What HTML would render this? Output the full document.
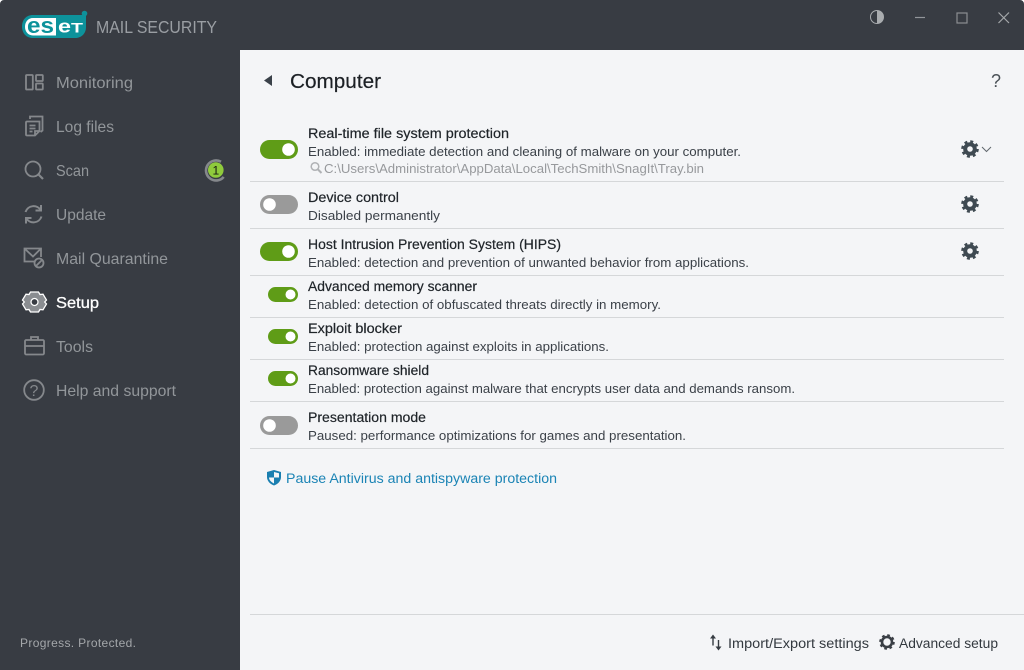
<!DOCTYPE html>
<html><head><meta charset="utf-8"><title>ESET Mail Security</title>
<style>
html,body{margin:0;padding:0;background:#fff;width:1024px;height:670px;overflow:hidden}
svg{display:block}
text{font-family:"Liberation Sans",sans-serif;white-space:pre}
.nav{font-size:16px;fill:#92969a}
.t{font-size:13.5px;fill:#1f2429;stroke:#1f2429;stroke-width:.2}
.s{font-size:13px;fill:#3b4148}
.f{font-size:13.5px;fill:#33393f}
</style></head><body>
<svg width="1024" height="670" viewBox="0 0 1024 670" xmlns="http://www.w3.org/2000/svg">
<defs>
<g id="gear"><circle r="4.8" fill="none" stroke="#3f4a52" stroke-width="4"/><circle r="7.6" fill="none" stroke="#3f4a52" stroke-width="2.400" stroke-dasharray="3 2.970"/></g>
<g id="on"><rect x="0" y="0" width="38" height="19" rx="9.5" fill="#5f9c17"/><circle cx="28.5" cy="9.5" r="6.3" fill="#fff"/></g>
<g id="off"><rect x="0" y="0" width="38" height="19" rx="9.5" fill="#9a9a9a"/><circle cx="9.5" cy="9.5" r="6.3" fill="#fff"/></g>
<g id="son"><rect x="0" y="0" width="30" height="15" rx="7.5" fill="#5f9c17"/><circle cx="22.5" cy="7.5" r="5" fill="#fff"/></g>
</defs>

<rect x="0" y="0" width="1024" height="670" fill="#fff"/>
<path d="M4 0H1020a4 4 0 0 1 4 4V50H240V670H0V4a4 4 0 0 1 4-4z" fill="#383c43"/>
<rect x="240" y="50" width="784" height="620" fill="#f4f5f7"/>

<!-- logo -->
<path d="M33 15H86V27C86 34 81 38 75 38H33C26 38 22 33 22 26.500C22 20 26 15 33 15z" fill="#0d929b"/>
<path d="M33 18H56V35.500H33C28 35.500 25 31.500 25 26.800C25 22 28 18 33 18z" fill="#fff"/>
<text x="27" y="33" font-size="22" font-weight="bold" fill="#0d929b" textLength="27" lengthAdjust="spacingAndGlyphs">es</text>
<text x="58" y="32.500" font-size="18" font-weight="bold" fill="#fff" textLength="13" lengthAdjust="spacingAndGlyphs">e</text>
<text x="71" y="32.500" font-size="14" font-weight="bold" fill="#fff" textLength="12" lengthAdjust="spacingAndGlyphs">T</text>
<circle cx="84.500" cy="13.500" r="2.800" fill="#0d929b"/>
<text x="96" y="33" font-size="17.500" fill="#9a9ea3" textLength="121" lengthAdjust="spacingAndGlyphs">MAIL SECURITY</text>

<!-- window controls -->
<circle cx="877" cy="17" r="6.500" fill="#383c43" stroke="#a9acaf" stroke-width="1"/>
<path d="M877 10.500a6.500 6.500 0 0 1 0 13z" fill="#a9acaf"/>
<path d="M915 17.500H925" stroke="#92959a" stroke-width="1.200"/>
<rect x="957" y="13" width="10" height="10" fill="none" stroke="#8b8e92" stroke-width="1.200"/>
<path d="M998.500 12.500L1009 23M1009 12.500L998.500 23" stroke="#a5a8ab" stroke-width="1.200" fill="none"/>

<!-- nav icons -->
<g fill="none" stroke="#85888c" stroke-width="1.800">
<rect x="26" y="75" width="6.800" height="14.500" rx=".8"/><rect x="36" y="75" width="6.800" height="6" rx=".8"/><rect x="36" y="83.500" width="6.800" height="6" rx=".8"/>
<path d="M30 119V116.500h12.500v14l-2 1.500M26 122.500a1 1 0 0 1 1-1h12.500v9.500l-4.500 4.500H27a1 1 0 0 1-1-1zM29.500 125.500h6M29.500 128.500h6M29.500 131.500h3M39.500 131h-4.500v4.500"/>
<circle cx="33" cy="169" r="7.500"/><path d="M38.500 174.500L43 179" stroke-width="2.200"/>
<path d="M41 210.500A8.500 8.500 0 0 0 25.500 212M41 205v5.500h-5.500" stroke-width="2"/>
<path d="M26 218A8.500 8.500 0 0 0 41.500 216.500M26 223.500v-5.500h5.500" stroke-width="2"/>
<path d="M35 261.500H24.500V248.500H41V257M25 249l8 7.500 7.500-7.500"/>
<circle cx="39" cy="263" r="4.500"/><path d="M36 266l6-6"/>
<rect x="25" y="340" width="19" height="14.500" rx="1.200"/><path d="M31 340v-3h7v3M25 346h19"/>
<circle cx="34" cy="390" r="9.800"/>
</g>
<text x="34" y="396" font-size="16" text-anchor="middle" fill="#85888c">?</text>
<!-- setup gear -->
<path d="M30.500 292h8l1.500 2.500 3-.3 3.500 5.800-1.800 2 1.800 2-3.500 5.800-3-.3-1.500 2.500h-8l-1.500-2.500-3 .3-3.500-5.800 1.800-2-1.800-2 3.500-5.800 3 .3z" fill="#8a8d91" stroke="#fff" stroke-width="1.300"/>
<circle cx="34.500" cy="302" r="3.500" fill="#383c43" stroke="#fff" stroke-width="1.300"/>

<!-- nav -->
<text class="nav" x="56" y="88" textLength="77" lengthAdjust="spacingAndGlyphs">Monitoring</text>
<text class="nav" x="56" y="132" textLength="58" lengthAdjust="spacingAndGlyphs">Log files</text>
<text class="nav" x="56" y="176" textLength="33" lengthAdjust="spacingAndGlyphs">Scan</text>
<text class="nav" x="56" y="220" textLength="50" lengthAdjust="spacingAndGlyphs">Update</text>
<text class="nav" x="56" y="264" textLength="112" lengthAdjust="spacingAndGlyphs">Mail Quarantine</text>
<text x="56" y="308" font-size="16" fill="#fff" stroke="#fff" stroke-width=".3" textLength="43" lengthAdjust="spacingAndGlyphs">Setup</text>
<text class="nav" x="56" y="352" textLength="37" lengthAdjust="spacingAndGlyphs">Tools</text>
<text class="nav" x="56" y="396" textLength="120" lengthAdjust="spacingAndGlyphs">Help and support</text>
<text x="20" y="647" font-size="12" fill="#a4a7aa" textLength="116" lengthAdjust="spacing">Progress. Protected.</text>

<!-- badge -->
<path d="M221 161.800A10 10 0 1 0 223.700 176.900" fill="none" stroke="#85888c" stroke-width="2.600"/>
<circle cx="215.800" cy="170" r="7.800" fill="#8fcb3c"/>
<text x="215.800" y="174.500" font-size="12" text-anchor="middle" fill="#15190f">1</text>

<!-- header -->
<path d="M272 75v11l-8-5.500z" fill="#3a4149"/>
<text x="290" y="88" font-size="20" fill="#1c2025" stroke="#1c2025" stroke-width=".2" textLength="91" lengthAdjust="spacingAndGlyphs">Computer</text>
<text x="996" y="87" font-size="18" text-anchor="middle" fill="#4a5157">?</text>

<!-- rows -->
<use href="#on" x="260" y="140"/>
<text class="t" x="308" y="138" textLength="201" lengthAdjust="spacingAndGlyphs">Real-time file system protection</text>
<text class="s" x="308" y="156" textLength="433" lengthAdjust="spacingAndGlyphs">Enabled: immediate detection and cleaning of malware on your computer.</text>
<circle cx="315" cy="166.500" r="3.800" fill="none" stroke="#b0b2b5" stroke-width="1.500"/><path d="M318 169.500l3.500 3.500" stroke="#b0b2b5" stroke-width="2"/>
<text x="324" y="173" font-size="12.500" fill="#97999c" textLength="380" lengthAdjust="spacingAndGlyphs">C:\Users\Administrator\AppData\Local\TechSmith\SnagIt\Tray.bin</text>
<use href="#gear" x="970" y="149"/>
<path d="M982 147l4.500 4.500 4.500-4.500" fill="none" stroke="#61686e" stroke-width="1"/>
<rect x="250" y="181" width="754" height="1" fill="#d5d7d9"/>

<use href="#off" x="260" y="195"/>
<text class="t" x="308" y="202" textLength="91" lengthAdjust="spacingAndGlyphs">Device control</text>
<text class="s" x="308" y="220" textLength="132" lengthAdjust="spacingAndGlyphs">Disabled permanently</text>
<use href="#gear" x="970" y="204"/>
<rect x="250" y="228" width="754" height="1" fill="#d5d7d9"/>

<use href="#on" x="260" y="242"/>
<text class="t" x="308" y="249" textLength="253" lengthAdjust="spacingAndGlyphs">Host Intrusion Prevention System (HIPS)</text>
<text class="s" x="308" y="267" textLength="441" lengthAdjust="spacingAndGlyphs">Enabled: detection and prevention of unwanted behavior from applications.</text>
<use href="#gear" x="970" y="251"/>
<rect x="250" y="275" width="754" height="1" fill="#d5d7d9"/>

<use href="#son" x="268" y="287"/>
<text class="t" x="308" y="291" textLength="169" lengthAdjust="spacingAndGlyphs">Advanced memory scanner</text>
<text class="s" x="308" y="309" textLength="353" lengthAdjust="spacingAndGlyphs">Enabled: detection of obfuscated threats directly in memory.</text>
<rect x="250" y="317" width="754" height="1" fill="#d5d7d9"/>

<use href="#son" x="268" y="329"/>
<text class="t" x="308" y="333" textLength="94" lengthAdjust="spacingAndGlyphs">Exploit blocker</text>
<text class="s" x="308" y="351" textLength="301" lengthAdjust="spacingAndGlyphs">Enabled: protection against exploits in applications.</text>
<rect x="250" y="359" width="754" height="1" fill="#d5d7d9"/>

<use href="#son" x="268" y="371"/>
<text class="t" x="308" y="375" textLength="121" lengthAdjust="spacingAndGlyphs">Ransomware shield</text>
<text class="s" x="308" y="393" textLength="487" lengthAdjust="spacingAndGlyphs">Enabled: protection against malware that encrypts user data and demands ransom.</text>
<rect x="250" y="401" width="754" height="1" fill="#d5d7d9"/>

<use href="#off" x="260" y="416"/>
<text class="t" x="308" y="422" textLength="118" lengthAdjust="spacingAndGlyphs">Presentation mode</text>
<text class="s" x="308" y="440" textLength="378" lengthAdjust="spacingAndGlyphs">Paused: performance optimizations for games and presentation.</text>
<rect x="250" y="448" width="754" height="1" fill="#d5d7d9"/>

<!-- link -->
<path d="M274 470l7 2v5c0 4-3 7-7 8.500-4-1.500-7-4.500-7-8.500v-5z" fill="#1a7fb0"/>
<path d="M274 472l5 1.300v4.200h-5zM274 477.500v6c-2.500-1.200-5-3.300-5-6z" fill="#f4f5f7"/>
<text x="286" y="483" font-size="13.500" fill="#1b84b5" textLength="271" lengthAdjust="spacingAndGlyphs">Pause Antivirus and antispyware protection</text>

<!-- footer -->
<rect x="250" y="614" width="774" height="1" fill="#d5d7d9"/>
<path d="M713 645.500V636M718.500 640v9" fill="none" stroke="#363c42" stroke-width="1.400"/>
<path d="M713 634.500l3 4h-6zM718.500 650.500l3-4h-6z" fill="#363c42"/>
<text class="f" x="728" y="648" textLength="141" lengthAdjust="spacingAndGlyphs">Import/Export settings</text>
<g transform="translate(887,642)"><circle r="5" fill="none" stroke="#3a3f45" stroke-width="2.600"/><circle r="6.800" fill="none" stroke="#3a3f45" stroke-width="2" stroke-dasharray="2.700 2.640"/></g>
<text class="f" x="899" y="648" textLength="99" lengthAdjust="spacingAndGlyphs">Advanced setup</text>
</svg>
</body></html>
